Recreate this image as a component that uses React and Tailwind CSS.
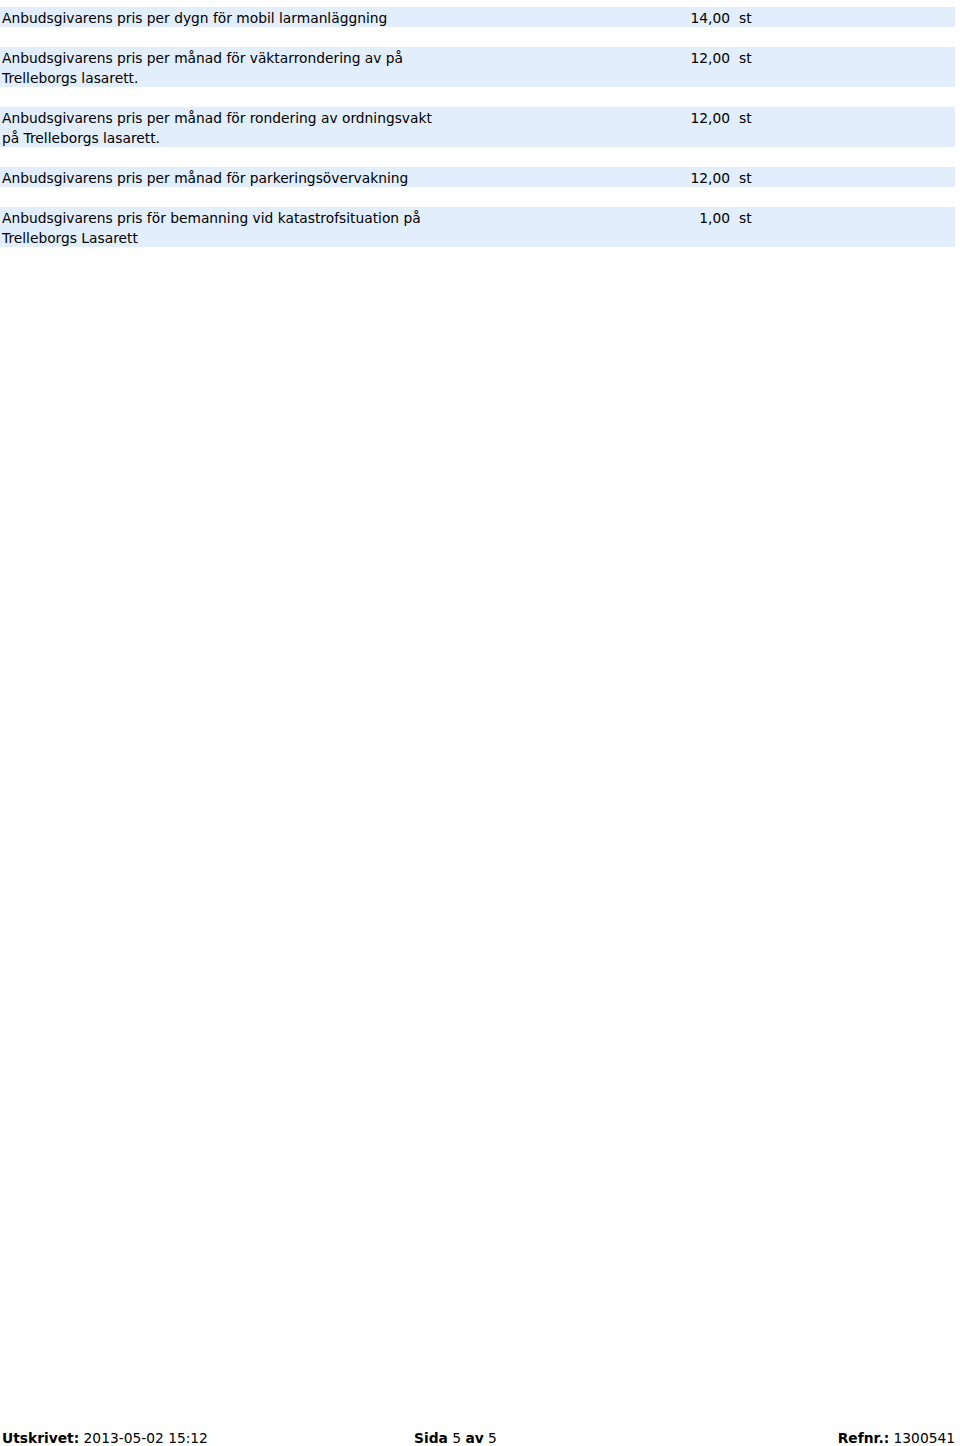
import React from 'react';

const rows = [
  { label: 'Anbudsgivarens pris per dygn för mobil larmanläggning', qty: '14,00' },
  { label: 'Anbudsgivarens pris per månad för väktarrondering av på Trelleborgs lasarett.', qty: '12,00' },
  { label: 'Anbudsgivarens pris per månad för rondering av ordningsvakt på Trelleborgs lasarett.', qty: '12,00' },
  { label: 'Anbudsgivarens pris per månad för parkeringsövervakning', qty: '12,00' },
  { label: 'Anbudsgivarens pris för bemanning vid katastrofsituation på Trelleborgs Lasarett', qty: '1,00' },
];

const App = () => {
  return (
    <div
      className="min-h-[1446px] flex flex-col bg-white text-black text-[13.8px] leading-5"
      style={{ fontFamily: 'Verdana, "DejaVu Sans", sans-serif' }}
    >
      {/* Items */}
      <div className="flex flex-col gap-5 pt-[7px] w-[955px]">
        {rows.map((row, i) => (
          <div key={i} className="flex bg-[#e3eefc]">
            <div className="w-[444px] pl-[2px] translate-y-[1px]">{row.label}</div>
            <div className="w-[286px] text-right translate-y-[1px]">{row.qty}</div>
            <div className="pl-[9px] translate-y-[1px]">st</div>
          </div>
        ))}
      </div>

      {/* Footer */}
      <div className="mt-auto flex items-center h-5 pl-[2px] pr-[5px] translate-y-[2px]">
        <div className="w-[412px]">
          <span className="font-bold">Utskrivet:</span> 2013-05-02 15:12
        </div>
        <div className="flex-1">
          <span className="font-bold">Sida</span> 5 <span className="font-bold">av</span> 5
        </div>
        <div>
          <span className="font-bold">Refnr.:</span> 1300541
        </div>
      </div>
    </div>
  );
};

export default App;
